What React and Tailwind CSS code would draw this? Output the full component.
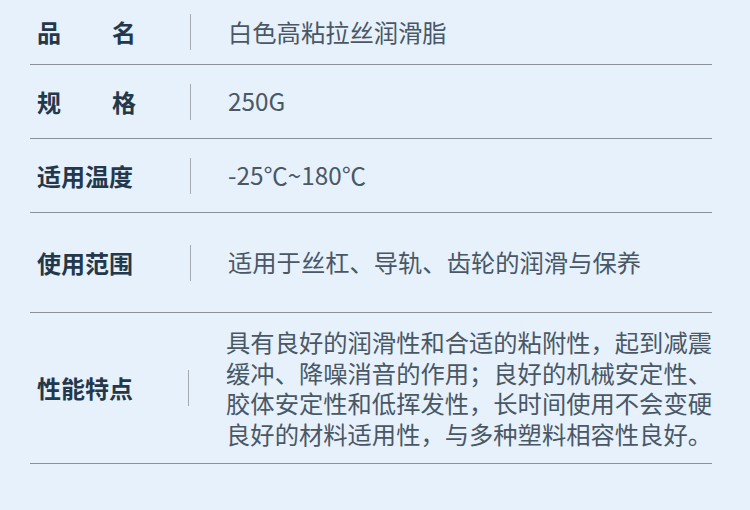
import React from 'react'

const rows = [
  { label: ['品', '名'], value: '白色高粘拉丝润滑脂', h: 'h-[65px]' },
  { label: ['规', '格'], value: '250G', h: 'h-[74px]' },
  { label: ['适用温度'], value: '-25℃~180℃', h: 'h-[74px]' },
  { label: ['使用范围'], value: '适用于丝杠、导轨、齿轮的润滑与保养', h: 'h-[100px]' },
]

const features = [
  '具有良好的润滑性和合适的粘附性，起到减震',
  '缓冲、降噪消音的作用；良好的机械安定性、',
  '胶体安定性和低挥发性，长时间使用不会变硬',
  '良好的材料适用性，与多种塑料相容性良好。',
]

function Label({ parts }) {
  return (
    <div className='w-[99px] flex justify-between text-[24px] font-bold text-[#24384c] leading-none'>
      {parts.map((p, i) => <span key={i}>{p}</span>)}
    </div>
  )
}

export default function App() {
  return (
    <div
      className='w-[750px] h-[510px] bg-[#e6f1fb] px-[30px] overflow-hidden'
      style={{ fontFamily: '"Noto Sans CJK SC", "Noto Sans", sans-serif' }}
    >
      <div className='w-[682px]'>
        {rows.map((r, i) => (
          <div key={i} className={`${r.h} flex items-center border-b border-[#8b9198] pl-[7px]`}>
            <Label parts={r.label} />
            <div className='w-px h-[36px] bg-[#a3aab2] ml-[54px] mr-[37px]' />
            <div className='text-[24.3px] text-[#4a5765] leading-none'>{r.value}</div>
          </div>
        ))}

        {/* 性能特点 */}
        <div className='h-[151px] flex items-center border-b border-[#8b9198] pl-[7px]'>
          <Label parts={['性能特点']} />
          <div className='w-px h-[36px] bg-[#a3aab2] ml-[54px] mr-[37px]' />
          <div className='text-[24.3px] text-[#4a5765] leading-[30.5px] whitespace-nowrap'>
            {features.map((f, i) => <div key={i}>{f}</div>)}
          </div>
        </div>
      </div>
    </div>
  )
}
